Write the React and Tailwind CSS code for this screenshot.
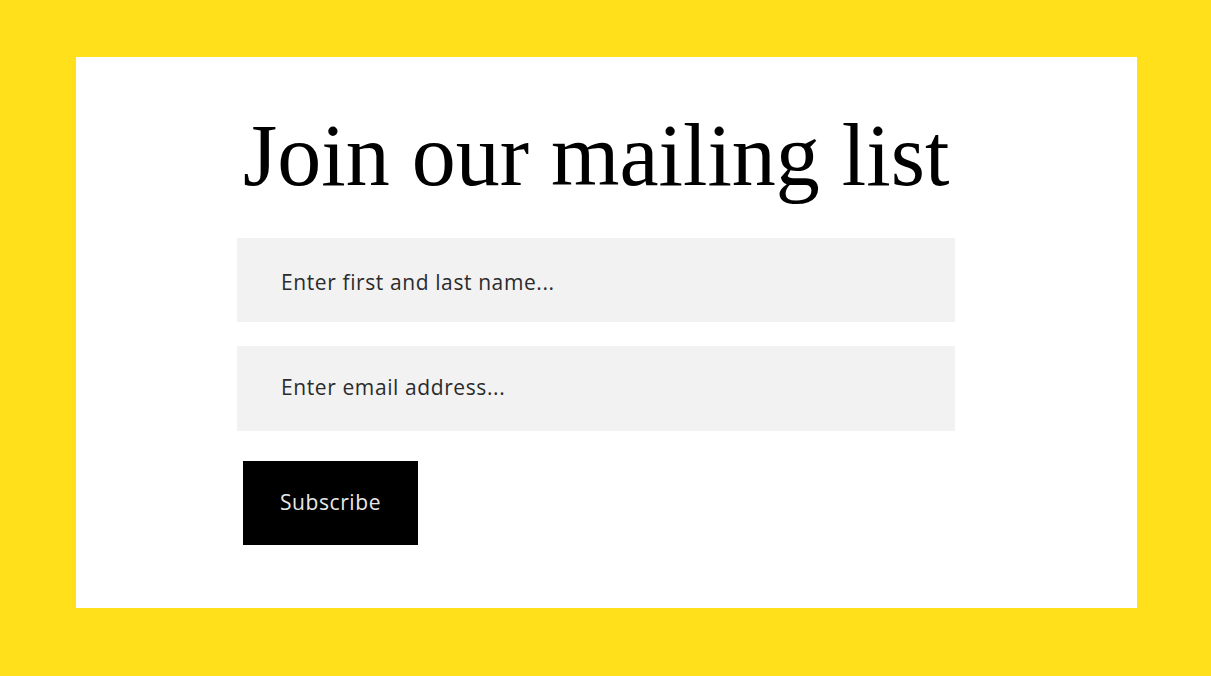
export default function App() {
  return (
    <div className="min-h-[676px] w-full bg-[#ffe01b] pt-[57px]">
      <div className="ml-[76px] h-[551px] w-[1061px] bg-white pl-[161px] pt-[55px]">
        <h1
          className="ml-[6px] text-[88px] leading-none text-black"
          style={{ fontFamily: '"Liberation Serif", serif' }}
        >
          Join our mailing list
        </h1>

        <form
          className="mt-[38px] flex w-[718px] flex-col gap-[24px]"
          style={{ fontFamily: '"Open Sans", sans-serif' }}
          onSubmit={(e) => e.preventDefault()}
        >
          <input
            type="text"
            placeholder="Enter first and last name..."
            className="h-[84px] w-full bg-[#f2f2f2] px-[44px] pt-[4px] text-[21px] tracking-[0.6px] text-[#222] outline-none placeholder:text-[#2b2b2b]"
          />
          <input
            type="email"
            placeholder="Enter email address..."
            className="h-[85px] w-full bg-[#f2f2f2] px-[44px] pb-[4px] text-[21px] tracking-[0.6px] text-[#222] outline-none placeholder:text-[#2b2b2b]"
          />
          <button
            type="submit"
            className="ml-[6px] mt-[6px] h-[84px] w-[175px] bg-black text-[21px] tracking-[0.6px] text-[#e8e8e8]"
          >
            Subscribe
          </button>
        </form>
      </div>
    </div>
  );
}
